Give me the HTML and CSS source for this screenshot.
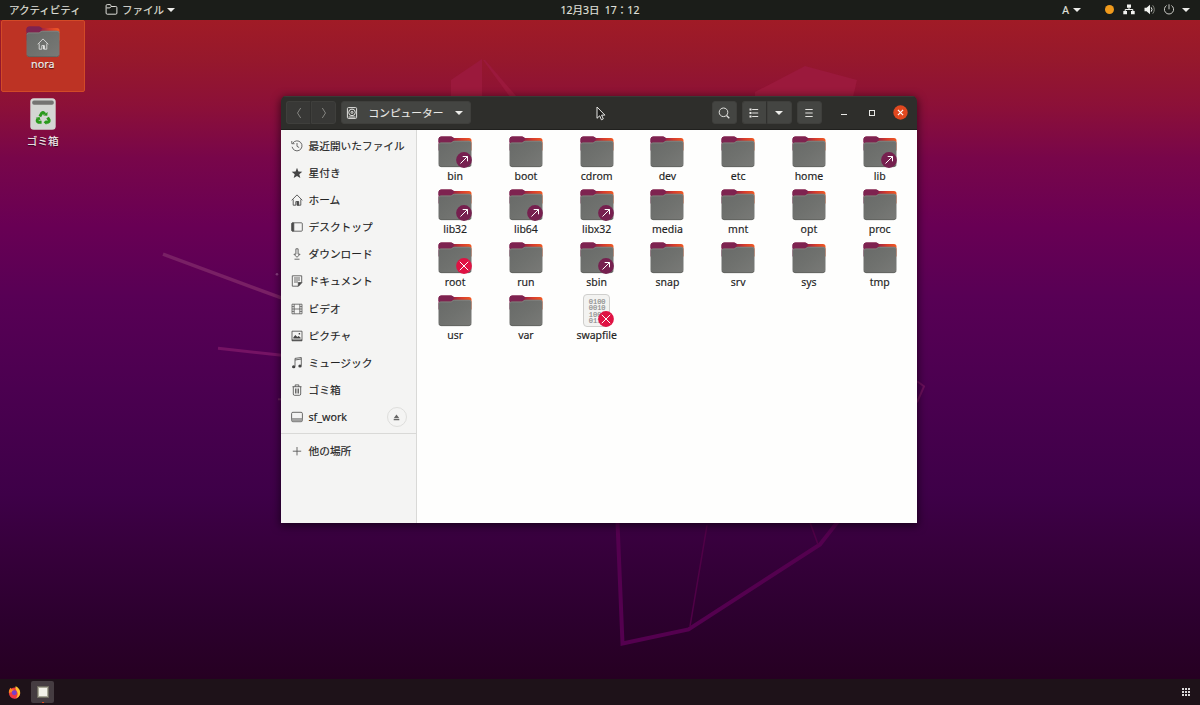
FILE: index.html
```html
<!DOCTYPE html>
<html lang="ja">
<head>
  <meta charset="UTF-8" />
  <meta name="viewport" content="width=device-width, initial-scale=1" />
  <title>コンピューター</title>
  <link rel="stylesheet" href="styles.css">
</head>
<body>

  <!-- Shared icons -->
  <svg class="defs" width="0" height="0" aria-hidden="true">
    <defs>
      <linearGradient id="tab" x1="0" y1="0" x2="1" y2="0">
        <stop offset="0" stop-color="#7e2350" />
        <stop offset="0.45" stop-color="#9c2442" />
        <stop offset="0.7" stop-color="#d63c2c" />
        <stop offset="1" stop-color="#f05a24" />
      </linearGradient>
      <linearGradient id="front" x1="0" y1="0" x2="1" y2="1">
        <stop offset="0" stop-color="#686a68" />
        <stop offset="0.5" stop-color="#6f716e" />
        <stop offset="1" stop-color="#797a77" />
      </linearGradient>
      <symbol id="folder" viewBox="0 0 34 34">
        <path d="M.5 4.500a3 3 0 0 1 3-3h9.500c1.600 0 1.800 1.500 3.200 1.500H31A2.500 2.500 0 0 1 33.500 5.500v10H.5z" fill="url(#tab)" />
        <path d="M.5 4.500a3 3 0 0 1 3-3h9.500c1.600 0 1.800 1.500 3.200 1.500l-2 4H.5z" fill="#7e2350" />
        <path d="M.5 9.500A2.300 2.300 0 0 1 2.800 7.500H12.500c1.800 0 2-1.700 4-1.700H31a2.500 2.500 0 0 1 2.500 2.400V29a3 3 0 0 1-3 3h-27a3 3 0 0 1-3-3z" fill="url(#front)" />
        <path d="M1 9.500Q1.300 8 2.800 8h9.700c1.800 0 2-1.700 4-1.700H31q2 0 2.200 1.700" fill="none" stroke="#8b8c89" stroke-width=".6" />
        <path d="M1 30.200q.6 1.500 2.500 1.500h27q1.900 0 2.500-1.500" fill="none" stroke="#555754" stroke-width=".6" />
      </symbol>
      <symbol id="link" viewBox="0 0 16 16">
        <circle cx="8" cy="8" r="7.900" fill="#76204f" />
        <path d="M4.500 11.500l7-7M6.700 4.500h4.800v4.800" fill="none" stroke="#fff" stroke-width="1" />
      </symbol>
      <symbol id="denied" viewBox="0 0 16 16">
        <circle cx="8" cy="8" r="7.900" fill="#df1243" />
        <path d="M3.800 3.800l8.400 8.400M12.200 3.800l-8.400 8.400" fill="none" stroke="#fff" stroke-width="1" />
      </symbol>
      <symbol id="house" viewBox="0 0 12 12">
        <path d="M.7 6.300L6 .9l5.300 5.400M2.200 5.500v5.700h2.600V7.600h2.400v3.600h2.600V5.500" fill="none" stroke="currentColor" stroke-width=".85" />
        <path d="M6 7.600h1.700v3.700H6z" fill="currentColor" />
      </symbol>
    </defs>
  </svg>

  <header class="topbar">
    <div class="topbar-left">
      <span class="activities">アクティビティ</span>
      <svg class="app-icon" viewBox="0 0 12 11"><path d="M.6 9V1.700Q.6.600 1.700.600h2.800q.8 0 .9 1l.2.900h4.700q1.100 0 1.100 1.100V9q0 1.200-1.100 1.200H1.700Q.6 10.200.6 9zM1 3.900h3.400l1.200-1.300" fill="none" stroke="#deded9" stroke-width="1" /></svg>
      <span>ファイル</span>
      <i class="arrow"></i>
    </div>
    <div class="clock">12月3日&ensp;17：12</div>
    <div class="topbar-right">
      <span class="lang">A</span>
      <i class="arrow"></i>
      <i class="dot"></i>
      <svg class="net" viewBox="0 0 12 11"><path d="M4 .5h4v3.300H4zM.3 7h3.700v3.300H.3zM8 7h3.700v3.300H8z" fill="#f2f2ef" /><path d="M6 3.500v2M2.200 7V5.500h7.600V7" fill="none" stroke="#f2f2ef" /></svg>
      <svg class="vol" viewBox="0 0 12 11"><path d="M.5 3.700h2L6 .7v9.600l-3.500-3h-2z" fill="#f2f2ef" /><path d="M7.200 3.300q1.600 2.200 0 4.400" fill="none" stroke="#f2f2ef" /><path d="M8.700 1.300q3.200 4.200 0 8.400" fill="none" stroke="#85867f" /></svg>
      <svg class="power" viewBox="0 0 12 11"><path d="M3.600 1.500a4.600 4.600 0 1 0 4.800 0M6 .3v5" fill="none" stroke="#c9c9c4" stroke-width="1" /></svg>
      <i class="arrow"></i>
    </div>
  </header>

  <main class="desktop">
    <svg class="wallpaper" viewBox="0 20 1200 659" preserveAspectRatio="none" aria-hidden="true">
      <path d="M451 80l31-21v38h-31z" fill="#9b193c" />
      <path d="M483 60l27 37h7L485 60z" fill="#9b193c" />
      <path d="M755 92l50-26 52 14-4 17H755z" fill="#9b193c" />
      <path d="M163 254l119 44" stroke="#792065" stroke-width="3.500" />
      <path d="M218 348l64 7" stroke="#751364" stroke-width="3" />
      <circle cx="277" cy="274" r="1.300" fill="#8b3f82" />
      <path d="M278 399h4" stroke="#69205d" stroke-width="2" />
      <path d="M917 381l7 5-7 16" fill="none" stroke="#6c105c" stroke-width="2" />
      <path d="M617.500 522l5 121 66-14L820 544l18-23" fill="none" stroke="#54004f" stroke-width="4" />
      <path d="M707 525l-17 101M810 522l8 22" fill="none" stroke="#500047" stroke-width="1.500" />
    </svg>

    <div class="shortcuts">
      <div class="shortcut selected">
        <div class="shortcut-icon">
          <svg class="folder"><use href="#folder" /></svg>
          <svg class="home-mark"><use href="#house" /></svg>
        </div>
        <span>nora</span>
      </div>
      <div class="shortcut">
        <svg class="bin" viewBox="0 0 26 32">
          <rect x=".3" y=".3" width="25.400" height="31.400" rx="3.500" fill="#d4d6d3" />
          <rect x="2.200" y="2.500" width="21.600" height="4.200" rx="1.800" fill="#747472" />
          <g fill="none" stroke="#2a9a1c" stroke-width="2.900">
            <path d="M9.800 18.400l2-3.400q1.200-1 2.400.2l.6 1" />
            <path d="M17.600 19.400l1.500 2.500q.4 1.900-1.400 2.400h-1.700" />
            <path d="M11.600 24.300H8.600q-2-.6-1.300-2.500l.6-1" />
          </g>
          <path d="M13.300 17.600l4 .2.300-3.700zM16.300 22v4.800l-2.700-2.500zM5.700 19.800l3.900-.7 1 3.300z" fill="#2a9a1c" />
        </svg>
        <span>ゴミ箱</span>
      </div>
    </div>

    <section class="window">
      <div class="titlebar">
        <div class="group nav">
          <button class="btn" aria-label="戻る"><svg viewBox="0 0 12 12"><path d="M7.700 1L4.500 6l3.200 5" /></svg></button>
          <button class="btn" aria-label="進む"><svg viewBox="0 0 12 12"><path d="M4.300 1l3.200 5-3.200 5" /></svg></button>
        </div>
        <button class="btn path">
          <svg viewBox="0 0 12 12"><rect x="1.400" y=".6" width="9.200" height="10.800" rx="1" /><circle cx="6" cy="5.400" r="3.300" /><circle cx="6" cy="5.400" r="1" /><path d="M2.500 10h7" /></svg>
          <span>コンピューター</span>
          <i class="arrow"></i>
        </button>
        <div class="spacer"></div>
        <button class="btn" aria-label="検索"><svg viewBox="0 0 12 12"><circle cx="5.500" cy="5.300" r="4.300" /><path d="M8.500 8.500l2.800 2.800" stroke-width="1.300" /></svg></button>
        <div class="group view">
          <button class="btn" aria-label="表示"><svg viewBox="0 0 12 12"><path d="M4.200 2.500h6M4.200 6h6M4.200 9.500h6" /><path d="M1.500 1.500h2v2h-2zM1.500 5h2v2h-2zM1.500 8.500h2v2h-2z" fill="#e9e9e6" stroke="none" /></svg></button>
          <button class="btn" aria-label="表示オプション"><i class="arrow"></i></button>
        </div>
        <button class="btn menu" aria-label="メニュー"><svg viewBox="0 0 12 12"><path d="M2.300 2.500h7.400M2.300 6h7.400M2.300 9.500h7.400" /></svg></button>
        <div class="controls">
          <i class="minimize"></i>
          <i class="maximize"></i>
          <svg class="close" viewBox="0 0 15 15"><circle cx="7.500" cy="7.500" r="7.200" fill="#e0481f" /><path d="M4.900 4.900l5.200 5.200M10.100 4.900l-5.200 5.200" stroke="#fff" stroke-width="1.200" /></svg>
        </div>
      </div>

      <div class="content">
        <nav class="sidebar">
          <a class="place"><svg viewBox="0 0 12 12"><path d="M1.900 3a5 5 0 1 1-.8 3.800M.8 1v2.700h2.700M6 3v3.300l2.200 1.300" /></svg>最近開いたファイル</a>
          <a class="place"><svg viewBox="0 0 12 12"><path d="M6 .8l1.400 3.700 3.900.2-3 2.500 1 3.900L6 8.900l-3.300 2.200 1-3.900-3-2.500 3.900-.2z" fill="#444" stroke="none" /></svg>星付き</a>
          <a class="place"><svg><use href="#house" /></svg>ホーム</a>
          <a class="place"><svg viewBox="0 0 12 12"><rect x=".7" y="1.800" width="10.600" height="8.400" rx=".9" /><path d="M1 2h1.800v8H1z" fill="#444" /></svg>デスクトップ</a>
          <a class="place"><svg viewBox="0 0 12 12"><path d="M4.900.8h2.200v5.400h2L6 9.300 2.900 6.200h2zM3.500 11.200h5" /></svg>ダウンロード</a>
          <a class="place"><svg viewBox="0 0 12 12"><path d="M1.300.8h9.400v6.800l-3.400 3.600h-6zM3 3h6M3 5h6M3 7h4" /><path d="M7.300 11.200V7.600h3.400z" fill="#444" /></svg>ドキュメント</a>
          <a class="place"><svg viewBox="0 0 12 12"><path d="M1 1.200h10v9.600H1zM3.200 1.200v9.600M8.800 1.200v9.600M3.200 6h5.600M1 3.600h2.200M1 6h2.200M1 8.400h2.200M8.800 3.600H11M8.800 6H11M8.800 8.400H11" stroke-width=".75" /></svg>ビデオ</a>
          <a class="place"><svg viewBox="0 0 12 12"><path d="M1 1.200h10v9.600H1z" /><path d="M2.300 8.500V7.500l2-2.500 2 2 1.300-1L9.700 7.700v.8zM7.700 3h1.400v1.400H7.700zM1 9.600h10v1.200H1z" fill="#444" stroke="none" /></svg>ピクチャ</a>
          <a class="place"><svg viewBox="0 0 12 12"><path d="M4 9.300V1.400l6.300-.9v8M4 3l6.300-1" /><ellipse cx="2.700" cy="9.800" rx="1.700" ry="1.500" fill="#444" stroke="none" /><ellipse cx="9" cy="8.900" rx="1.700" ry="1.500" fill="#444" stroke="none" /></svg>ミュージック</a>
          <a class="place"><svg viewBox="0 0 12 12"><path d="M1.500 2.700h9M4.200 2.700V.9h3.600v1.800M2.300 2.700V10q0 1.300 1.200 1.300h5q1.200 0 1.200-1.300V2.700M4.500 4.500v5M6 4.500v5M7.500 4.500v5" /></svg>ゴミ箱</a>
          <a class="place"><svg viewBox="0 0 12 12"><rect x=".6" y="1.300" width="10.800" height="9.400" rx="1.300" /><path d="M1 7.500h10V10H1z" fill="#a5a5a4" stroke="#9a9a99" /></svg>sf_work<span class="eject"><svg viewBox="0 0 8 8"><path d="M4 .6l3.200 4.300H.8zM.8 5.800h6.400v1.400H.8z" fill="#666" stroke="none" /></svg></span></a>
          <hr />
          <a class="place"><svg viewBox="0 0 12 12"><path d="M6 2v8.400M1.800 6.200h8.400" /></svg>他の場所</a>
        </nav>

        <div class="files">
          <div class="file"><div class="icon"><svg class="folder"><use href="#folder" /></svg><svg class="emblem"><use href="#link" /></svg></div>bin</div>
          <div class="file"><div class="icon"><svg class="folder"><use href="#folder" /></svg></div>boot</div>
          <div class="file"><div class="icon"><svg class="folder"><use href="#folder" /></svg></div>cdrom</div>
          <div class="file"><div class="icon"><svg class="folder"><use href="#folder" /></svg></div>dev</div>
          <div class="file"><div class="icon"><svg class="folder"><use href="#folder" /></svg></div>etc</div>
          <div class="file"><div class="icon"><svg class="folder"><use href="#folder" /></svg></div>home</div>
          <div class="file"><div class="icon"><svg class="folder"><use href="#folder" /></svg><svg class="emblem"><use href="#link" /></svg></div>lib</div>

          <div class="file"><div class="icon"><svg class="folder"><use href="#folder" /></svg><svg class="emblem"><use href="#link" /></svg></div>lib32</div>
          <div class="file"><div class="icon"><svg class="folder"><use href="#folder" /></svg><svg class="emblem"><use href="#link" /></svg></div>lib64</div>
          <div class="file"><div class="icon"><svg class="folder"><use href="#folder" /></svg><svg class="emblem"><use href="#link" /></svg></div>libx32</div>
          <div class="file"><div class="icon"><svg class="folder"><use href="#folder" /></svg></div>media</div>
          <div class="file"><div class="icon"><svg class="folder"><use href="#folder" /></svg></div>mnt</div>
          <div class="file"><div class="icon"><svg class="folder"><use href="#folder" /></svg></div>opt</div>
          <div class="file"><div class="icon"><svg class="folder"><use href="#folder" /></svg></div>proc</div>

          <div class="file"><div class="icon"><svg class="folder"><use href="#folder" /></svg><svg class="emblem"><use href="#denied" /></svg></div>root</div>
          <div class="file"><div class="icon"><svg class="folder"><use href="#folder" /></svg></div>run</div>
          <div class="file"><div class="icon"><svg class="folder"><use href="#folder" /></svg><svg class="emblem"><use href="#link" /></svg></div>sbin</div>
          <div class="file"><div class="icon"><svg class="folder"><use href="#folder" /></svg></div>snap</div>
          <div class="file"><div class="icon"><svg class="folder"><use href="#folder" /></svg></div>srv</div>
          <div class="file"><div class="icon"><svg class="folder"><use href="#folder" /></svg></div>sys</div>
          <div class="file"><div class="icon"><svg class="folder"><use href="#folder" /></svg></div>tmp</div>

          <div class="file"><div class="icon"><svg class="folder"><use href="#folder" /></svg></div>usr</div>
          <div class="file"><div class="icon"><svg class="folder"><use href="#folder" /></svg></div>var</div>
          <div class="file"><div class="icon"><div class="binary">0100<br>0010<br>1001<br>0110</div><svg class="emblem"><use href="#denied" /></svg></div>swapfile</div>
        </div>
      </div>
    </section>

    <svg class="cursor" viewBox="0 0 10 15"><path d="M1 1v11.300l2.700-2.500 1.700 4 1.900-.9-1.700-3.800h3.300z" fill="#1d1d1b" stroke="#e8e8e6" stroke-width="1" /></svg>
  </main>

  <footer class="dock">
    <svg class="firefox" viewBox="0 0 12 12">
      <circle cx="6" cy="6.500" r="5.200" fill="#f0393f" />
      <path d="M.8 6.500C.6 4 1.500 2.300 2.600 1.600l.6 1.500 2.400.2L4 5.500z" fill="#ff8a1f" />
      <path d="M7 .2c3 1.300 4.700 4 4.200 7-.5 2.500-2.300 4.200-4.500 4.500 2.300-2 2.900-4.700 1.400-6.900C7 3.300 6.600 2 7 .2z" fill="#ffc12e" />
      <circle cx="5.800" cy="6.300" r="2.300" fill="#7740c8" />
      <path d="M1.600 9.500q4.200 3 8 .2-3.600 3.300-8-.2z" fill="#e52b83" />
    </svg>
    <div class="task"><i></i></div>
    <div class="apps"><i></i><i></i><i></i><i></i><i></i><i></i><i></i><i></i><i></i></div>
  </footer>

</body>
</html>
```
FILE: styles.css
```css
/* Reset & base */
*, *::before, *::after {
  box-sizing: border-box;
}
body {
  margin: 0;
  width: 1200px;
  height: 705px;
  overflow: hidden;
  display: flex;
  flex-direction: column;
  font-family: "Noto Sans", "Noto Sans CJK JP", sans-serif;
  font-size: 10.7px;
  line-height: 14px;
  color: #232323;
  -webkit-text-stroke: 0.15px;
}
svg {
  display: block;
  flex: none;
}
.defs {
  position: absolute;
}
.arrow {
  width: 0;
  height: 0;
  border: 4px solid transparent;
  border-top-color: #ededea;
  border-bottom: 0;
}

/* Top bar */
.topbar {
  height: 19.5px;
  flex: none;
  display: grid;
  grid-template-columns: 1fr auto 1fr;
  align-items: center;
  background: #1b1d19;
  color: #e0e0dc;
  font-size: 10.5px;
}
.topbar-left,
.topbar-right {
  display: flex;
  align-items: center;
}
.topbar-left {
  padding-left: 9px;
}
.activities {
  width: 96px;
}
.app-icon {
  width: 13px;
  height: 11px;
  margin-right: 4px;
}
.topbar-left .arrow {
  margin-left: 3px;
}
.topbar-right {
  justify-content: flex-end;
  padding-right: 10px;
}
.lang {
  margin-right: 4px;
}
.dot {
  width: 9px;
  height: 9px;
  margin: 0 9px 0 24px;
  border-radius: 50%;
  background: #f09a1c;
}
.net,
.vol,
.power {
  width: 12px;
  height: 11px;
}
.net {
  margin-right: 9px;
}
.vol {
  margin-right: 7px;
}
.power {
  margin-right: 7px;
}

/* Desktop */
.desktop {
  flex: 1;
  position: relative;
  background: linear-gradient(#a01b26 0, #96182c 6%, #8c1038 13%, #78064a 21%, #690054 31%, #580055 42%, #4b0050 56%, #3e0048 72%, #37003c 80%, #2c002e 91%, #260022 100%);
}
.wallpaper {
  position: absolute;
  inset: 0;
  width: 100%;
  height: 100%;
}
.shortcuts {
  position: relative;
  display: flex;
  flex-direction: column;
  gap: 6px;
  width: 85px;
  padding: .5px 0 0 .5px;
}
.shortcut {
  display: flex;
  flex-direction: column;
  align-items: center;
  height: 72px;
  color: #f3f0ee;
  text-shadow: 0 1px 1px rgba(0, 0, 0, 0.7);
}
.shortcut.selected {
  padding-top: 4px;
  border: 1px solid #d24a27;
  border-radius: 2px;
  background: #bd3324;
}
.shortcut-icon {
  position: relative;
  height: 32px;
}
.home-mark {
  position: absolute;
  left: 11px;
  top: 13px;
  width: 12px;
  height: 12px;
  color: #e3e3e1;
}
.bin {
  width: 26px;
  height: 32px;
  margin-bottom: 3.500px;
}
.folder {
  width: 34px;
  height: 34px;
}

/* Window */
.window {
  position: absolute;
  left: 281px;
  top: 76.5px;
  width: 636px;
  height: 426.5px;
  display: flex;
  flex-direction: column;
  border-radius: 5px 5px 0 0;
  box-shadow: 0 2px 9px 1px rgba(0, 0, 0, 0.55);
  overflow: hidden;
}
.titlebar {
  height: 34px;
  flex: none;
  display: flex;
  align-items: center;
  padding: 0 9px 1px 5px;
  background: #2e2e2b;
  border-top: 1px solid #3a3a37;
  border-bottom: 1px solid #20201e;
}
.btn {
  width: 25px;
  height: 23px;
  padding: 0;
  border: 1px solid #3f3f3c;
  border-radius: 3px;
  background: #444542;
  color: #e9e9e6;
  font: inherit;
  display: flex;
  align-items: center;
  justify-content: center;
}
.btn svg {
  width: 12px;
  height: 12px;
  fill: none;
  stroke: #e2e2df;
}
.group {
  display: flex;
}
.group .btn:first-child {
  border-radius: 3px 0 0 3px;
  border-right-color: #30302e;
}
.group .btn:last-child {
  border-radius: 0 3px 3px 0;
}
.nav {
  margin-right: 5px;
}
.nav .btn {
  background: #383836;
}
.nav svg {
  stroke: #858581;
}
.path {
  width: 130px;
  padding: 0 7px 0 4px;
  justify-content: flex-start;
}
.path span {
  margin-left: 10.5px;
  flex: 1;
  text-align: left;
  white-space: nowrap;
}
.spacer {
  flex: 1;
}
.view {
  margin: 0 5px;
}
.controls {
  display: flex;
  align-items: center;
  margin-left: 19.5px;
}
.minimize {
  width: 6px;
  height: 1px;
  margin: 4px 22px 0 0;
  background: #e9e9e6;
}
.maximize {
  width: 6px;
  height: 6px;
  margin-right: 18px;
  border: 1px solid #e9e9e6;
}
.close {
  width: 15px;
  height: 15px;
}

/* Sidebar */
.content {
  flex: 1;
  display: flex;
  background: #fefefd;
}
.sidebar {
  width: 136px;
  padding-top: 2px;
  border-right: 1px solid #d9d9d7;
  background: #f4f4f3;
}
.place {
  height: 27.18px;
  display: flex;
  align-items: center;
  padding: 0 9.5px 0 10px;
  white-space: nowrap;
}
.place > svg {
  width: 12px;
  height: 12px;
  margin-right: 5.5px;
  fill: none;
  stroke: #505050;
  stroke-width: 0.85;
  color: #444;
}
.eject {
  width: 20px;
  height: 20px;
  margin-left: auto;
  border: 1px solid #dededc;
  border-radius: 50%;
  display: flex;
  align-items: center;
  justify-content: center;
}
.eject svg {
  width: 7px;
  height: 7px;
}
.sidebar hr {
  height: 1px;
  margin: 2px 0 3.5px;
  border: 0;
  background: #d9d9d7;
}

/* Files */
.files {
  flex: 1;
  display: grid;
  grid-template-columns: repeat(7, 70.75px);
  grid-auto-rows: 53.15px;
  align-content: start;
  padding: 4.7px 0 0 2.8px;
  font-size: 10.5px;
}
.file {
  display: flex;
  flex-direction: column;
  align-items: center;
}
.icon {
  position: relative;
  width: 34px;
  height: 34px;
  display: flex;
  justify-content: center;
}
.emblem {
  position: absolute;
  right: 0;
  bottom: 1px;
  width: 16px;
  height: 16px;
}
.binary {
  width: 27px;
  height: 33px;
  padding: 3.5px 0 0 1px;
  border: 1px solid #cfcfcd;
  border-radius: 4px;
  background: #f3f3f1;
  font: 7px/6.5px "Liberation Mono", monospace;
  color: #888;
  text-align: center;
}

.cursor {
  position: absolute;
  left: 596px;
  top: 86px;
  width: 10px;
  height: 15px;
}

/* Dock */
.dock {
  height: 26px;
  flex: none;
  display: flex;
  align-items: center;
  padding: 0 10px 0 8px;
  background: #1e1219;
}
.firefox {
  width: 13px;
  height: 13px;
}
.task {
  position: relative;
  width: 23px;
  height: 22px;
  margin-left: 10px;
  border-radius: 2px;
  background: #453c41;
  display: flex;
  align-items: center;
  justify-content: center;
}
.task i {
  width: 10px;
  height: 10px;
  border: 1px solid #aaa899;
  outline: 1px solid #6d6a5f;
  background: #f2f1e8;
}
.task::after {
  content: "";
  position: absolute;
  left: 11px;
  bottom: 0;
  width: 2px;
  height: 1px;
  background: #e0481f;
}
.apps {
  margin-left: auto;
  display: grid;
  grid-template-columns: repeat(3, 2px);
  gap: 1px;
}
.apps i {
  height: 2px;
  background: #dcd8da;
}
```
